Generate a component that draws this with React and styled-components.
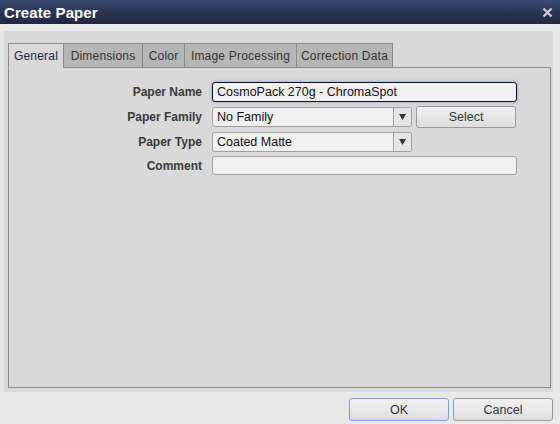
import React, { useState } from 'react';
import styled, { createGlobalStyle } from 'styled-components';

const GlobalStyle = createGlobalStyle`
  html, body {
    margin: 0;
    padding: 0;
    background: #e8e8e8;
    font-family: "Liberation Sans", Arial, sans-serif;
  }
`;

const Dialog = styled.div`
  width: 560px;
  height: 424px;
  display: flex;
  flex-direction: column;
  background: #e8e8e8;
`;

const TitleBar = styled.div`
  height: 24px;
  flex-shrink: 0;
  display: flex;
  align-items: center;
  justify-content: space-between;
  padding: 0 7px 0 4px;
  background: linear-gradient(to bottom, #3a4a70 0%, #2a3554 50%, #1f2944 100%);
`;

const Title = styled.div`
  color: #ffffff;
  font-weight: bold;
  font-size: 15px;
  letter-spacing: 0.1px;
`;

const CloseButton = styled.div`
  width: 12px;
  height: 12px;
  display: flex;
  align-items: center;
  justify-content: center;
  margin-top: 1px;
`;

const Body = styled.div`
  flex: 1;
  padding: 7px 7px 0 4px;
`;

const Panel = styled.div`
  height: 361px;
  background: #d9d9d9;
  padding: 12px 3px 4px 4px;
  box-sizing: border-box;
  display: flex;
  flex-direction: column;
`;

const TabBar = styled.div`
  display: flex;
  height: 25px;
  position: relative;
  z-index: 1;
`;

const Tab = styled.div`
  height: 25px;
  width: ${p => p.$width}px;
  box-sizing: border-box;
  display: flex;
  align-items: center;
  justify-content: center;
  font-size: 12px;
  letter-spacing: 0.2px;
  color: ${p => (p.$active ? '#1e2a40' : '#333333')};
  background: ${p => (p.$active ? '#d9d9d9' : '#b6b6b6')};
  border: 1px solid #8a8a8a;
  border-bottom: ${p => (p.$active ? '1px solid #d9d9d9' : '1px solid #8a8a8a')};
  margin-left: ${p => (p.$first ? '0' : '-1px')};
  cursor: default;
`;

const TabContent = styled.div`
  flex: 1;
  border: 1px solid #8a8a8a;
  margin-top: -1px;
  width: 543px;
  box-sizing: border-box;
  padding: 14px 0 0 0;
`;

const Form = styled.div`
  display: grid;
  grid-template-columns: 193px 304px;
  column-gap: 10px;
  row-gap: 4px;
  align-items: center;
`;

const Label = styled.div`
  text-align: right;
  font-size: 12px;
  font-weight: bold;
  color: #3a3a3a;
`;

const TextInput = styled.input`
  height: ${p => (p.$focused ? '20px' : '19px')};
  box-sizing: border-box;
  width: ${p => p.$width || '305px'};
  border: 1px solid ${p => (p.$focused ? '#111' : '#a0a0a0')};
  border-radius: 3px;
  background: #f0f0f0;
  font-family: "Liberation Sans", Arial, sans-serif;
  font-size: 12.5px;
  color: #111;
  padding: 0 4px;
  outline: none;
  box-shadow: ${p => (p.$focused ? '0 0 3px 1px rgba(130,160,230,0.6)' : 'none')};
`;

const FieldRow = styled.div`
  display: flex;
  align-items: center;
  gap: 4px;
`;

const SelectBox = styled.div`
  width: 200px;
  height: 20px;
  box-sizing: border-box;
  border: 1px solid #a0a0a0;
  border-radius: 3px;
  background: #f0f0f0;
  display: flex;
  align-items: stretch;
  font-size: 12.5px;
  color: #111;
`;

const SelectValue = styled.div`
  flex: 1;
  display: flex;
  align-items: center;
  padding: 0 4px;
`;

const SelectArrow = styled.div`
  width: 17px;
  border-left: 1px solid #a0a0a0;
  background: #e4e4e4;
  display: flex;
  align-items: center;
  justify-content: center;
  border-radius: 0 2px 2px 0;
`;

const Button = styled.button`
  width: ${p => p.$width || '100px'};
  height: ${p => p.$height || '23px'};
  box-sizing: border-box;
  border: 1px solid ${p => (p.$primary ? '#7a9ed8' : '#9a9a9a')};
  border-radius: 3px;
  background: linear-gradient(to bottom, #f2f2f2 0%, #dedede 100%);
  font-family: "Liberation Sans", Arial, sans-serif;
  font-size: 12.5px;
  color: #333;
  padding: 0;
  cursor: default;
`;

const Footer = styled.div`
  display: flex;
  justify-content: flex-end;
  gap: 4px;
  padding: 6px 0 0 0;
`;

const Arrow = () => (
  <svg width="7" height="6" viewBox="0 0 7 6">
    <path d="M0 0 L7 0 L3.5 6 Z" fill="#333" />
  </svg>
);

const tabs = [
  { label: 'General', width: 56 },
  { label: 'Dimensions', width: 80 },
  { label: 'Color', width: 43 },
  { label: 'Image Processing', width: 113 },
  { label: 'Correction Data', width: 97 },
];

export default function App() {
  const [active, setActive] = useState(0);
  return (
    <>
      <GlobalStyle />
      <Dialog>
        <TitleBar>
          <Title>Create Paper</Title>
          <CloseButton>
            <svg width="11" height="11" viewBox="0 0 11 11">
              <path d="M1.5 1.5 L9.5 9.5 M9.5 1.5 L1.5 9.5" stroke="#c8c8d0" strokeWidth="2.4" />
            </svg>
          </CloseButton>
        </TitleBar>
        <Body>
          <Panel>
            <TabBar>
              {tabs.map((t, i) => (
                <Tab
                  key={t.label}
                  $width={t.width}
                  $active={i === active}
                  $first={i === 0}
                  onClick={() => setActive(i)}
                >
                  {t.label}
                </Tab>
              ))}
            </TabBar>
            <TabContent>
              <Form>
                <Label>Paper Name</Label>
                <TextInput $focused defaultValue="CosmoPack 270g - ChromaSpot" />
                <Label>Paper Family</Label>
                <FieldRow>
                  <SelectBox>
                    <SelectValue>No Family</SelectValue>
                    <SelectArrow><Arrow /></SelectArrow>
                  </SelectBox>
                  <Button $height="22px">Select</Button>
                </FieldRow>
                <Label>Paper Type</Label>
                <FieldRow>
                  <SelectBox>
                    <SelectValue>Coated Matte</SelectValue>
                    <SelectArrow><Arrow /></SelectArrow>
                  </SelectBox>
                </FieldRow>
                <Label>Comment</Label>
                <TextInput defaultValue="" />
              </Form>
            </TabContent>
          </Panel>
          <Footer>
            <Button $primary>OK</Button>
            <Button>Cancel</Button>
          </Footer>
        </Body>
      </Dialog>
    </>
  );
}
